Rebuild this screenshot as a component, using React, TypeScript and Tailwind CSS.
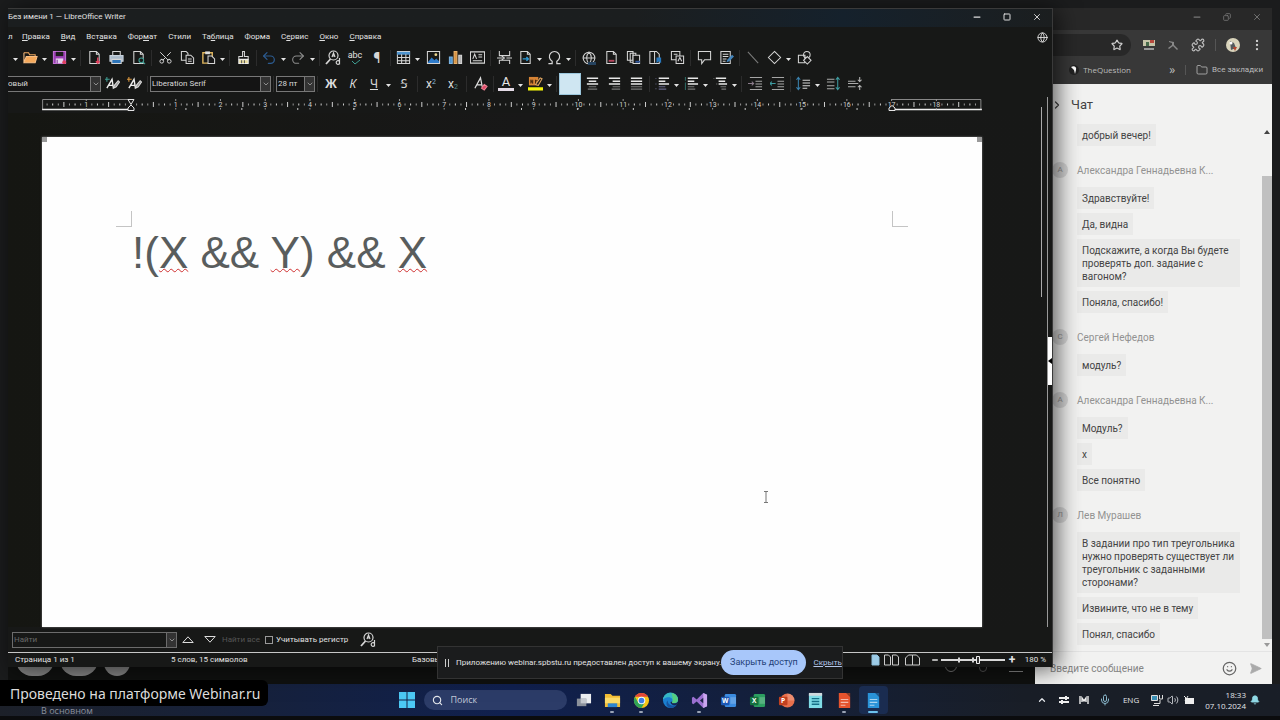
import React from "react";
import {
  Star, Puzzle, EllipsisVertical, Folder, ChevronRight, ChevronUp, ChevronDown, Smile, SendHorizontal,
  Search, Mic, Bell, Volume2, Minus, Square, X, Copy, Undo2, Redo2, Scissors, Globe,
} from "lucide-react";

type Kids = { children?: React.ReactNode };

function Glyph({ children }: Kids) {
  return (
    <svg viewBox="0 0 16 16" className="size-[15px] shrink-0" fill="none" stroke="#d6d6d6" strokeWidth="1.1" aria-hidden="true">
      {children}
    </svg>
  );
}

function Tool({ label, children }: Kids & { label: string }) {
  return (
    <button type="button" aria-label={label} className="flex h-[22px] w-[22px] shrink-0 items-center justify-center">
      {children}
    </button>
  );
}

function Split({ label, children }: Kids & { label: string }) {
  return (
    <div className="flex shrink-0">
      <button type="button" aria-label={label} className="flex h-[22px] w-5 items-center justify-center">
        {children}
      </button>
      <Arrow label={`${label}: список`} />
    </div>
  );
}

function Arrow({ label }: { label: string }) {
  return (
    <button type="button" aria-label={label} className="flex h-[22px] w-[9px] shrink-0 items-center justify-center">
      <svg viewBox="0 0 5 3" className="mt-1 h-[3px] w-[5px]" fill="#e4e4e4" aria-hidden="true"><path d="M0 0h5L2.5 3z" /></svg>
    </button>
  );
}

function Sep() {
  return <span className="flex h-4 w-[5px] shrink-0 justify-center"><i className="w-px bg-[#2c2c2c]" /></span>;
}

const doc = <path d="M3 1.5h7l3 3v10H3zM10 1.5v3h3" />;

function Lines({ d }: { d: string }) {
  return <path d={d} stroke="#e8e8e8" strokeWidth="1.6" />;
}

function MainToolbar() {
  return (
    <div role="toolbar" aria-label="Стандартная" className="flex h-[25px] items-center overflow-hidden pl-[3px]">
      <Arrow label="Создать: список" />
      <Split label="Открыть">
        <Glyph><path d="M1 3h5l1 2h6v2" stroke="#f0a860" /><path d="M1 13V3M1 13.5 3.5 7H15l-2 6.5z" fill="#f5a95b" stroke="#f8c088" /></Glyph>
      </Split>
      <Split label="Сохранить">
        <Glyph><path d="M1.5 1.5h13v13h-13z" fill="#9b3fb4" stroke="#c674d8" /><path d="M4 2h8v4.500H4z" fill="#1c1c1c" stroke="none" /><path d="M4 9h8v5H4z" fill="#e6d3ec" stroke="none" /><path d="M5.500 10.500v4" stroke="#7b2b92" /><circle cx="13" cy="13" r="2" fill="#e0405e" stroke="none" /></Glyph>
      </Split>
      <Sep />
      <Tool label="Экспорт в PDF"><Glyph>{doc}<path d="M11.500 8v6M9.500 12l2 2 2-2" stroke="#e0405e" strokeWidth="1.600" /></Glyph></Tool>
      <Tool label="Печать"><Glyph><path d="M4 6V1.500h8V6" /><path d="M1 6h14v6H1z" fill="#a9b9c8" stroke="#c8d2dc" /><path d="M3 10h10v4.500H3z" fill="#2d74b8" stroke="#d6d6d6" /></Glyph></Tool>
      <Tool label="Просмотр печати"><Glyph>{doc}<circle cx="11" cy="11" r="2.500" fill="#181818" stroke="#3f9f94" /><path d="m13 13 2 2" stroke="#3f9f94" /></Glyph></Tool>
      <Sep />
      <Tool label="Вырезать"><Scissors className="size-[15px] -rotate-90" color="#d0d0d0" strokeWidth={1.6} /></Tool>
      <Tool label="Копировать"><Glyph><path d="M1.500 1.500h5l2 2V11h-7z" /><path d="M6.500 5.500h5l3 3v6h-8z" fill="#181818" /><path d="M8.500 9.500h4M8.500 12h4" /></Glyph></Tool>
      <Split label="Вставить">
        <Glyph><path d="M2 3h10v11H2z" stroke="#e0b55e" strokeWidth="1.500" /><path d="M4.500 1.500h5v3h-5z" fill="#dedede" stroke="none" /><path d="M7.500 6.500h4l3 3v5h-7z" fill="#181818" /></Glyph>
      </Split>
      <Sep />
      <Tool label="Копировать форматирование"><Glyph><path d="M7 1.500h2V7h4v3H3V7h4z" /><path d="M3 10.500h10v4H3z" fill="#e8dc9c" stroke="#eee" /><path d="M6 11v3M9 11v3" stroke="#555" /></Glyph></Tool>
      <Sep />
      <Split label="Отменить"><Undo2 className="size-4" color="#2c5c92" strokeWidth={1.8} /></Split>
      <Split label="Повторить"><Redo2 className="size-4" color="#8d8d8d" strokeWidth={1.6} /></Split>
      <Sep />
      <Tool label="Найти и заменить"><FindGlyph /></Tool>
      <Tool label="Проверка правописания">
        <span className="flex flex-col items-center text-[9px] leading-[9px] text-[#e2e2e2]">abc<svg viewBox="0 0 10 5" className="h-[5px] w-2.5" fill="none" stroke="#3f9f94" aria-hidden="true"><path d="m2 1 3 3 5-4" /></svg></span>
      </Tool>
      <Tool label="Непечатаемые символы"><span className="text-[14px] leading-4 text-[#d6d6d6]">¶</span></Tool>
      <Sep />
      <Split label="Вставить таблицу"><Glyph><path d="M1.500 1.500h13v13h-13z" /><path d="M1 2h14v3H1z" fill="#4f95d0" stroke="none" /><path d="M1.500 8h13M1.500 11.500h13M6 4.500v10M10.500 4.500v10" /></Glyph></Split>
      <Tool label="Вставить изображение"><Glyph><path d="M2 13 6 8l3 3 2-2 4 4v2H2z" fill="#2f7ccb" stroke="none" /><path d="M1.500 1.500h13v13h-13z" /><circle cx="10.500" cy="5" r="1.500" fill="#ead48c" stroke="none" /></Glyph></Tool>
      <Tool label="Вставить диаграмму"><Glyph><path d="M1.500 7.500h3v7h-3z" fill="#4f95d0" stroke="#7db5e3" /><path d="M6.500 1.500h3v13h-3z" fill="#d99242" stroke="#e9b26c" /><path d="M11.500 5.500h3v9h-3z" fill="#b5b5b5" /></Glyph></Tool>
      <Tool label="Вставить врезку"><Glyph><path d="M.5 2h15v12H.5zM3 9.500 5 4.500l2 5M9 5h4M9 7.500h4M3 11.500h10" /></Glyph></Tool>
      <Sep />
      <Tool label="Разрыв страницы"><Glyph><path d="M2.500 1v5h11V1M2.500 15v-4h11v4M0 8.500h6M10 8.500h6M5 6.500l3 2-3 2" /></Glyph></Tool>
      <Split label="Вставить поле"><Glyph>{doc}<path d="M5 9.500h6M9 7.500l2 2-2 2" stroke="#2e9ad6" strokeWidth="1.500" /></Glyph></Split>
      <Split label="Вставить символ">
        <Glyph><path d="M1.500 14.500h4v-2.500A5.500 5.500 0 1 1 10.500 12v2.500h4" strokeWidth="1.300" /></Glyph>
      </Split>
      <Sep />
      <Tool label="Вставить гиперссылку"><span className="relative flex"><Globe className="size-3.5" color="#cfcfcf" strokeWidth={1.8} /><i className="absolute right-0 bottom-0 h-[3px] w-2 bg-[#26435f]" /></span></Tool>
      <Tool label="Вставить сноску"><Glyph>{doc}<path d="M5 11.500h6" stroke="#b8485f" strokeWidth="2" /></Glyph></Tool>
      <Tool label="Вставить концевую сноску"><Glyph><path d="M1.500 1.500h6V11h-6zM4.500 3.500h6V13h-6z" /><path d="M7.500 5.500h7v9h-7z" fill="#181818" /><path d="M10 12.500h5" stroke="#31589a" strokeWidth="2" /></Glyph></Tool>
      <Tool label="Вставить закладку"><Glyph><path d="M2 1.500h7l3 3v10H2z" /><path d="M7 1.500v12" /><path d="M9 8h5v6l-2.500-2L9 14z" fill="#2878bd" stroke="none" /></Glyph></Tool>
      <Tool label="Перекрёстная ссылка"><Glyph><path d="M1.500 1.500h9v9h-9z" /><path d="M6.500 6.500h8v8h-8z" fill="#181818" /><path d="M4 4.500h4M8.500 12l2-4 2 4" /></Glyph></Tool>
      <Sep />
      <Tool label="Вставить комментарий"><Glyph><path d="M1.500 1.500h13v9H8l-3 4v-4H1.500z" /></Glyph></Tool>
      <Tool label="Запись изменений"><Glyph><path d="M2 1.500h10v13H2zM4 4.500h6M4 7h6M4 9.500h4M4 12h3" /><path d="m8 13 1-3 5-5 2 2-5 5z" fill="#4385bd" stroke="none" /></Glyph></Tool>
      <Sep />
      <Tool label="Линия"><Glyph><path d="m2 2 11 12" stroke="#7c7c7c" /></Glyph></Tool>
      <Split label="Фигуры"><Glyph><path d="m8 1.500 6.500 6.500L8 14.500 1.500 8z" /></Glyph></Split>
      <Tool label="Функции рисования"><Glyph><path d="M1.500 5.500h7v8h-7z" /><circle cx="10.500" cy="5" r="3.500" /><path d="m11 7 4 4-4 4-4-4z" fill="#181818" /></Glyph></Tool>
    </div>
  );
}

function FindGlyph() {
  return (
    <svg viewBox="0 0 16 16" className="size-4" fill="none" stroke="#d6d6d6" strokeWidth="1.2" aria-hidden="true">
      <circle cx="8.500" cy="5.500" r="4.500" /><path d="M5.500 9 1 14" strokeWidth="1.800" />
      <path d="M7 7l1.500-4L10 7M7.500 6h2M14.500 8v6.500M14.500 11.500a1.800 1.800 0 1 0 0 2" />
    </svg>
  );
}

function Combo({ label, value, box }: { label: string; value: string; box: string }) {
  return (
    <label className={`flex h-4 shrink-0 border border-[#777] ${box}`}>
      <select aria-label={label} defaultValue={value} className="min-w-0 flex-1 appearance-none bg-[#141414] text-[8px] leading-[14px] text-[#d9d9d9] outline-none">
        <option>{value}</option>
      </select>
      <span className="flex w-2.5 items-center justify-center border-l border-[#777] bg-[#333]"><ChevronDown className="size-2" color="#bbb" /></span>
    </label>
  );
}

function StyleGlyph({ color }: { color: string }) {
  return (
    <Glyph><path d="M2 1v5M0 3.500h5" stroke={color} /><path d="m2 13 5.500-9.500L9 13M4 10h5" stroke="#eee" strokeWidth="1.500" /><path d="m9 13 1-3 4-5 1.500 1.500-3.500 5z" fill="#999" stroke="#ddd" /></Glyph>
  );
}

function FormatToolbar() {
  const letter = "font-['Noto_Sans',sans-serif] text-[12px] leading-4 text-[#dcdcdc]";
  return (
    <div role="toolbar" aria-label="Форматирование" className="flex h-[27px] items-center overflow-hidden">
      <Combo label="Стиль абзаца" value="овый" box="w-[93px] border-l-0 -indent-1" />
      <Tool label="Обновить стиль"><StyleGlyph color="#3f9f94" /></Tool>
      <Tool label="Создать стиль"><StyleGlyph color="#e09a3e" /></Tool>
      <Sep />
      <Combo label="Шрифт" value="Liberation Serif" box="w-[121px] pl-px" />
      <Sep />
      <Combo label="Размер шрифта" value="28 пт" box="w-[39px] pl-px" />
      <Sep />
      <Tool label="Полужирный"><b className={letter}>Ж</b></Tool>
      <Tool label="Курсив"><i className={letter}>К</i></Tool>
      <Split label="Подчёркнутый"><span className={`${letter} underline`}>Ч</span></Split>
      <Tool label="Зачёркнутый"><span className={`${letter} line-through decoration-[#888]`}>S</span></Tool>
      <Sep />
      <Tool label="Верхний индекс"><span className="text-[12px] leading-4 text-[#dcdcdc]">x<sup className="text-[7px] text-[#8db6d6]">2</sup></span></Tool>
      <Tool label="Нижний индекс"><span className="text-[12px] leading-4 text-[#dcdcdc]">x<sub className="text-[7px] text-[#588]">2</sub></span></Tool>
      <Sep />
      <Tool label="Очистить форматирование"><Glyph><path d="m2 13 6-11 2 10M4 9.500h6" stroke="#ddd" strokeWidth="1.300" /><path d="m9 13 3-4 3 2-3 4z" fill="#dc4766" stroke="#ee8294" /></Glyph></Tool>
      <Sep />
      <Split label="Цвет шрифта"><span className="flex flex-col items-center text-[13px] leading-3 text-[#e8e8e8]">A<i className="h-[3px] w-4 bg-[#e4dbe6]" /></span></Split>
      <Split label="Цвет выделения"><Glyph><path d="M1 1h10v9H1z" fill="#d58335" stroke="none" /><path d="M3 8V4l2 4V4M8 4v4h2V5H8" stroke="#4a2b10" /><path d="m8 9 5-7 2 1-4 7z" fill="#292018" stroke="#dfa763" /><path d="M0 12h16v3.500H0z" fill="#f3f30a" stroke="none" /></Glyph></Split>
      <Sep />
      <button type="button" aria-label="По левому краю" aria-pressed="true" className="h-[22px] w-[22px] shrink-0 border border-[#9cc7dd] bg-[#cfe6f2]" />
      <Tool label="По центру"><Glyph><Lines d="M2 2.500h12M4 5.500h8M2 8.500h12" /><path d="M4 11.500h8M3 14h10" stroke="#777" /></Glyph></Tool>
      <Tool label="По правому краю"><Glyph><Lines d="M2 2.500h12M6 5.500h8M2 8.500h12" /><path d="M6 11.500h8M5 14h9" stroke="#777" /></Glyph></Tool>
      <Tool label="По ширине"><Glyph><Lines d="M2 2.500h12M2 5.500h12M2 8.500h12" /><path d="M2 11.500h12M2 14h12" stroke="#777" /></Glyph></Tool>
      <Sep />
      <Split label="Маркированный список"><Glyph><Lines d="M4 2.500h11M4 5.500h7M4 8.500h11" /><path d="M4 11.500h7M4 14h8M1 2v1M1 8v1M1 13v1" stroke="#668" /></Glyph></Split>
      <Split label="Нумерованный список"><Glyph><Lines d="M4 2.500h11M4 5.500h7M4 8.500h11" /><path d="M4 11.500h7M4 14h8" stroke="#777" /><path d="M1.500 1v4M1.500 7v8" stroke="#2f6b66" /></Glyph></Split>
      <Split label="Структура"><Glyph><Lines d="M3 2.500h11M6 5.500h7M6 8.500h9" /><path d="M8 11.500h6M9 14h5M1 2v1M4 8v1" stroke="#777" /></Glyph></Split>
      <Sep />
      <Tool label="Увеличить отступ"><Glyph><path d="M2 1.500h13M8 5.500h7M8 8.500h7M8 11.500h7M2 14.500h13" stroke="#a5a5a5" /><path d="M0 8h6M4 6l2 2-2 2" stroke="#8a7b8a" /></Glyph></Tool>
      <Tool label="Уменьшить отступ"><Glyph><path d="M2 1.500h13M8 5.500h7M8 8.500h7M8 11.500h7M2 14.500h13" stroke="#a5a5a5" /><path d="M0 8h6M2 6 0 8l2 2" stroke="#3d9ba0" /></Glyph></Tool>
      <Sep />
      <Split label="Интервал"><Glyph><path d="M7 4.500h8M7 7.500h8M7 10.500h8M7 13h5" /><path d="M2.500 1.500v13M.5 4l2-2.500 2 2.500M.5 12l2 2.500 2-2.500" stroke="#3b83b0" /></Glyph></Split>
      <Tool label="Увеличить интервал"><Glyph><path d="M1 3.500h8M1 6.500h8M1 10.500h8M1 13.500h8" stroke="#aaa" /><path d="M12.500 1.500v13M10.500 4l2-2.500 2 2.500M10.500 12l2 2.500 2-2.500" stroke="#3d9ba0" /></Glyph></Tool>
      <Tool label="Уменьшить интервал"><Glyph><path d="M0 5.500h8M0 8h11M0 11.500h8" stroke="#aaa" /><path d="M12.500 1v5M10.500 4l2 2 2-2M12.500 15v-4.500M10.500 12l2-2 2 2" stroke="#bbb" /></Glyph></Tool>
    </div>
  );
}

function Ruler() {
  const cm = 44.8;
  const ticks: React.ReactNode[] = [];
  for (let q = -15; q <= 151; q++) {
    const x = 90 + (q * cm) / 8;
    if (q % 8 === 0) {
      const n = Math.abs(q / 8);
      if (n > 0) {
        ticks.push(<text key={q} x={x} y="8" fontSize="7" textAnchor="middle" fill="#d0d0d0">{n}</text>);
        ticks.push(<path key={`n${q}`} d={`M${x} 0v2M${x} 9v1.500`} stroke="#999" />);
      }
    } else {
      ticks.push(<path key={q} d={q % 4 ? `M${x} 4.500v2` : `M${x} 3v5`} stroke={q % 2 ? "#999" : "#d0d0d0"} />);
    }
  }
  for (let x = 145; x < 850; x += 56) ticks.push(<path key={`t${x}`} d={`M${x} 9v2`} stroke="#ccc" />);
  return (
    <div className="pt-[2px] pr-[70px] pb-[2px] pl-[33px]">
      <svg viewBox="0 0 942 12" className="block w-full" fill="none" aria-label="Линейка">
        <path d="M1.500 10V.5H90M852 .5h89V10" stroke="#8a8a8a" />
        <path d="M1 10.500h89M852 10.500h90" stroke="#f0f0f0" strokeWidth="1.500" />
        {ticks}
        <path d="M87 .5h6L90 5.500zM90 6l3 3v2.500h-6V9z" fill="#181818" stroke="#e8e8e8" />
        <path d="M852 6.500l3 2.500v2.500h-6V9z" fill="#181818" stroke="#e8e8e8" />
      </svg>
    </div>
  );
}

function WindowButtons({ dim }: { dim?: boolean }) {
  const color = dim ? "#777" : "#dedede";
  return (
    <div className="ml-auto flex shrink-0">
      <button type="button" aria-label="Свернуть" className="flex h-4 w-[30px] items-center justify-center"><Minus className="size-2.5" color={color} strokeWidth={3} /></button>
      <button type="button" aria-label="Развернуть" className="flex h-4 w-[30px] items-center justify-center">
        {dim ? <Copy className="size-2 -scale-x-100" color={color} strokeWidth={2.5} /> : <Square className="size-2" color={color} strokeWidth={3} />}
      </button>
      <button type="button" aria-label="Закрыть" className="flex h-4 w-[30px] items-center justify-center"><X className="size-2.5" color={color} strokeWidth={2.2} /></button>
    </div>
  );
}

const menus: [string, string, string][] = [
  ["", "П", "равка"], ["", "В", "ид"], ["Вст", "а", "вка"], ["Фор", "м", "ат"], ["Стили", "", ""],
  ["Та", "б", "лица"], ["Форма", "", ""], ["С", "е", "рвис"], ["", "О", "кно"], ["", "С", "правка"],
];

const wavy = "underline decoration-wavy decoration-[#cf2f2f] decoration-1 underline-offset-0 [text-decoration-skip-ink:none]";

function WriterWindow() {
  return (
    <section aria-label="LibreOffice Writer" className="absolute top-0 bottom-[17px] left-0 right-[219px] flex flex-col border-t border-r border-[#3a3a3a] bg-[#171817] font-[Roboto,'Noto_Sans',sans-serif] text-[#e2e2e2] shadow-[4px_2px_22px_rgba(0,0,0,0.65)]">
      <header className="flex h-[18px] items-center bg-linear-to-r from-[#1b1e1f] from-60% via-[#15212c] via-80% to-[#1b1e1f] pb-0.5">
        <h1 className="text-[8px] whitespace-nowrap">Без имени 1 — LibreOffice Writer</h1>
        <WindowButtons />
      </header>
      <nav className="flex h-[18px] items-center pt-0.5 text-[8px] whitespace-nowrap">
        <button type="button" className="w-3.5 text-left">л</button>
        <div className="flex gap-[11px]">
          {menus.map(([a, b, c]) => (
            <button type="button" key={a + b + c}>{a}<u>{b}</u>{c}</button>
          ))}
        </div>
        <Globe className="mr-1 ml-auto size-[11px]" color="#ddd" strokeWidth={2} />
      </nav>
      <MainToolbar />
      <FormatToolbar />
      <div className="relative flex min-h-0 flex-1 flex-col">
        <Ruler />
        <main className="min-h-0 flex-1 bg-linear-to-r from-[#151612] via-[#181818] to-[#171817] pt-6 pr-[70px] pl-[34px]">
          <article className="relative h-full bg-[#fefefe] px-[90px] pt-[90px] font-['Liberation_Sans',Arial,sans-serif] shadow-[0_0_2px_#777]">
            <i className="absolute top-0 left-0 size-[5px] bg-[#999]" />
            <i className="absolute top-0 right-0 size-[5px] bg-[#999]" />
            <i className="absolute top-[74px] left-[74px] size-4 border-r border-b border-[#c4c4c4]" />
            <i className="absolute top-[74px] right-[74px] size-4 border-b border-l border-[#c4c4c4]" />
            <p className="text-[44px] leading-[52px] whitespace-nowrap text-[#595d5d]">
              !(<span className={wavy}>X</span> &amp;&amp; <span className={wavy}>Y</span>) &amp;&amp; <span className={wavy}>X</span>
            </p>
            <svg viewBox="0 0 6 12" className="absolute right-[213px] bottom-[124px] h-3 w-1.5" fill="none" stroke="#777" aria-hidden="true"><path d="M1 .5h4M3 .5v11M1 11.500h4" /></svg>
          </article>
        </main>
        <i className="absolute top-2.5 right-[10px] h-[190px] w-px bg-[#aaa]" />
        <i className="absolute top-0 right-[4px] bottom-0 w-px bg-[#999]" />
        <button type="button" aria-label="Показать боковую панель" className="absolute top-[240px] right-0 flex h-12 w-1 items-center bg-white">
          <svg viewBox="0 0 4 6" className="h-1.5 w-1" aria-hidden="true"><path d="M4 0v6L0 3z" /></svg>
        </button>
      </div>
      <form className="flex h-[25px] items-center pl-1 text-[8px] whitespace-nowrap">
        <div className="flex h-4 w-[165px] border border-[#6c6c6c]">
          <input aria-label="Найти" placeholder="Найти" className="min-w-0 flex-1 bg-transparent px-px text-[8px] outline-none placeholder:text-[#686868]" />
          <span className="flex w-2.5 items-center justify-center border-l border-[#6c6c6c] bg-[#333]"><ChevronDown className="size-2" color="#bbb" /></span>
        </div>
        <button type="button" aria-label="Предыдущее" className="flex w-[22px] justify-center"><svg viewBox="0 0 12 7" className="h-[7px] w-3" fill="none" stroke="#ddd"><path d="M.8 6.500 6 .8l5.200 5.700z" /></svg></button>
        <button type="button" aria-label="Следующее" className="flex w-[22px] justify-center"><svg viewBox="0 0 12 7" className="h-[7px] w-3" fill="none" stroke="#ddd"><path d="M.8.5h10.400L6 6.200z" /></svg></button>
        <button type="button" className="w-10 text-center text-[#555]">Найти все</button>
        <label className="flex items-center gap-[3px] pl-1"><input type="checkbox" className="size-2 appearance-none border border-[#999]" />Учитывать регистр</label>
        <button type="button" aria-label="Найти и заменить" className="ml-3"><FindGlyph /></button>
      </form>
      <footer className="flex h-[15px] items-center border-t border-[#c6c6c6] text-[8px] whitespace-nowrap">
        <span className="w-[163px] pl-[7px]">Страница 1 из 1</span>
        <span className="w-[241px]">5 слов, 15 символов</span>
        <span>Базовый</span>
        <div className="ml-auto flex items-center">
          <svg viewBox="0 0 52 12" className="h-3 w-[52px]" fill="none" stroke="#ccc" aria-hidden="true">
            <path d="M1 1h5l2 2v8H1z" fill="#9ccbe6" stroke="#8fc0dc" /><path d="M13.500 1h4l2 2v8h-6zM21.500 1h4l2 2v8h-6zM34.500 11V4l3-3h4v10zM41.500 1h4l3 3v7h-7z" />
          </svg>
          <button type="button" aria-label="Уменьшить масштаб" className="ml-1.5 flex w-3 justify-center"><Minus className="size-2" strokeWidth={4} /></button>
          <svg viewBox="0 0 64 8" className="h-2 w-16" aria-hidden="true"><path d="M0 3h64v2H0zM17 1.500h2v5h-2zM31 1.500h2v5h-2z" fill="#d8d8d8" /><path d="M35.500.5h3v7h-3z" fill="#333" stroke="#eee" /></svg>
          <button type="button" aria-label="Увеличить масштаб" className="flex w-3.5 justify-center text-[12px] leading-3 font-bold">+</button>
          <output className="w-[33px] pr-1.5 text-right">180 %</output>
        </div>
      </footer>
    </section>
  );
}

const thread: { name?: string; letter?: string; items: string[] }[] = [
  { items: ["добрый вечер!"] },
  { name: "Александра Геннадьевна К...", letter: "А", items: ["Здравствуйте!", "Да, видна", "Подскажите, а когда Вы будете проверять доп. задание с вагоном?", "Поняла, спасибо!"] },
  { name: "Сергей Нефедов", letter: "С", items: ["модуль?"] },
  { name: "Александра Геннадьевна К...", letter: "А", items: ["Модуль?", "х", "Все понятно"] },
  { name: "Лев Мурашев", letter: "Л", items: ["В задании про тип треугольника нужно проверять существует ли треугольник с заданными сторонами?", "Извините, что не в тему", "Понял, спасибо"] },
];

function Chat() {
  return (
    <aside className="flex w-[237px] flex-col bg-[#f2f2f1] font-[Roboto,sans-serif] text-[#444]">
      <header className="flex h-10 shrink-0 items-center gap-2 pt-0.5 pl-4 text-[13px]">
        <ChevronRight className="size-3" strokeWidth={2.5} /><h2>Чат</h2>
      </header>
      <div className="flex min-h-0 flex-1">
        <div className="flex min-w-0 flex-1 flex-col gap-4 overflow-hidden pl-[17px]">
          {thread.map((g, i) => (
            <div key={i} className="flex flex-col">
              {g.name && (
                <div className="mb-[9px] flex h-4 items-center text-[10px] text-[#929292]">
                  <span className="flex size-4 items-center justify-center rounded-full bg-[#d6d6d6] text-[8px]">{g.letter}</span>
                  <span className="pl-[9px]">{g.name}</span>
                </div>
              )}
              <div className="flex flex-col items-start gap-1 pl-[25px]">
                {g.items.map((t) => (
                  <p key={t} className="max-w-[163px] bg-[#eaeae9] px-[5px] pt-[5px] pb-1 text-[10px] leading-[13px]">{t}</p>
                ))}
              </div>
            </div>
          ))}
        </div>
        <div className="flex w-2.5 flex-col items-center pt-1.5">
          <svg viewBox="0 0 6 4" className="h-1 w-1.5" aria-hidden="true"><path d="M0 4h6L3 0z" fill="#444" /></svg>
          <i className="mt-[42px] w-full flex-1 bg-[#c0c0c0]" />
          <svg viewBox="0 0 6 4" className="my-1 h-1 w-1.5" aria-hidden="true"><path d="M0 0h6L3 4z" fill="#999" /></svg>
        </div>
      </div>
      <form className="flex h-[33px] shrink-0 items-center border-t border-[#e4e4e4] pr-2.5 pl-[15px]">
        <input aria-label="Сообщение" placeholder="Введите сообщение" className="min-w-0 flex-1 text-[10px] outline-none placeholder:text-[#858585]" />
        <button type="button" aria-label="Смайлы"><Smile className="size-[15px]" color="#666" strokeWidth={2} /></button>
        <button type="button" aria-label="Отправить" className="ml-3"><SendHorizontal className="size-[13px]" color="#aaa" fill="#aaa" strokeWidth={1.5} /></button>
      </form>
    </aside>
  );
}

function ChromeWindow() {
  return (
    <section aria-label="Браузер" className="absolute inset-0 flex flex-col bg-[#101110] font-['Open_Sans','Noto_Sans',sans-serif] text-[#bbb]">
      <div className="flex h-[22px] items-center bg-[#282828] pb-1"><WindowButtons dim /></div>
      <div className="flex h-[30px] items-center justify-end bg-[#383838] pr-2">
        <div className="flex h-[22px] flex-1 items-center justify-end rounded-full bg-[#282828] pr-2"><Star className="size-3" color="#ccc" strokeWidth={2.4} /></div>
        <div className="flex shrink-0 items-center">
          <svg viewBox="0 0 12 12" className="ml-3 size-3" aria-hidden="true"><path d="M0 1h12v6H0z" fill="#c6c4a8" /><path d="M7 1h4v3H7z" fill="#b84a3e" /><path d="M3 3h3v4H3z" fill="#466a4a" /><path d="M1 9h10v2H1z" fill="#999" /></svg>
          <svg viewBox="0 0 12 12" className="ml-3 size-3" aria-hidden="true"><path d="M2 2l5 1v3l4 4-1 1-4-4-4 3-1-1 4-3V4L2 3z" fill="#888" /></svg>
          <Puzzle className="ml-3 size-3.5" color="#bbb" strokeWidth={2} />
          <i className="ml-2.5 h-3 w-px bg-[#555]" />
          <svg viewBox="0 0 14 14" className="ml-2.5 size-3.5" aria-hidden="true"><circle cx="7" cy="7" r="7" fill="#d9d4bc" /><path d="M4 3l4 2 2 5-5 2z" fill="#54595c" /><path d="M7 9h4l-2 4z" fill="#b5452e" /><circle cx="5" cy="5" r="1.500" fill="#fff" /></svg>
          <EllipsisVertical className="ml-2.5 size-3.5" color="#ccc" />
        </div>
      </div>
      <div className="flex h-6 items-center justify-end bg-[#383838] pr-[9px] pb-1 text-[8px]">
        <svg viewBox="0 0 10 10" className="size-2.5" aria-hidden="true"><circle cx="5" cy="5" r="5" fill="#222" /><path d="M2 2c3-2 6 0 5 3L6 9 5 5z" fill="#fff" /></svg>
        <span className="w-[90px] pl-1">TheQuestion</span>
        <span className="text-[12px] leading-3">»</span>
        <i className="mx-2.5 h-2.5 w-px bg-[#555]" />
        <Folder className="mr-1 size-3" color="#bbb" strokeWidth={1.6} />
        <span className="font-[Roboto,sans-serif]">Все закладки</span>
      </div>
      <div className="flex min-h-0 flex-1">
        <div className="flex flex-1 items-end gap-1.5 overflow-hidden pb-2 pl-2">
          <i className="h-8 w-[38px] rounded-full bg-[#8a8a8a]" />
          <i className="h-8 w-[38px] rounded-full bg-[#8a8a8a]" />
          <i className="size-[26px] rounded-full bg-[#8a8a8a]" />
          <span className="mr-3 ml-auto flex items-end gap-[22px] pb-1">
            <i className="size-3 rounded-full border border-[#777]" /><i className="h-3 w-2 rounded-full border border-[#555]" /><i className="h-3 w-3.5 border-b border-[#888]" />
          </span>
        </div>
        <Chat />
      </div>
    </section>
  );
}

function App16({ children }: Kids) {
  return <svg viewBox="0 0 18 18" className="size-[17px]" aria-hidden="true">{children}</svg>;
}

function Office({ light, dark, letter, round }: { light: string; dark: string; letter: string; round?: boolean }) {
  return (
    <App16>
      {round ? <circle cx="10" cy="9" r="7.500" fill={light} /> : <rect x="5" y="2" width="12" height="14" rx="1.500" fill={light} />}
      <path d={round ? "M10 1.500a7.500 7.500 0 0 1 7.500 7.500H10z" : "M11 5.500h6v7h-6z"} fill="#fff" fillOpacity=".2" />
      <rect x="1" y="5" width="9" height="9" rx="1" fill={dark} />
      <text x="5.500" y="12" fontSize="7" fontWeight="700" textAnchor="middle" fill="#fff">{letter}</text>
    </App16>
  );
}

function Sheet({ color, top }: { color: string; top: string }) {
  return (
    <App16><path d="M3 1h8l4 4v12H3z" fill={color} /><path d="M11 1h4v4z" fill={top} /><path d="M5 8h8M5 11h8M5 14h5" stroke="#fff" strokeOpacity=".6" strokeWidth="1.200" /></App16>
  );
}

const apps: { name: string; icon: React.ReactNode; open?: boolean; active?: boolean }[] = [
  { name: "Представление задач", icon: <App16><path d="M6 2h11v10H6z" fill="#eceef0" /><path d="M2 7h10v8H2z" fill="#8b919b" /><path d="M6 7h6v5H6z" fill="#c4c8cd" /></App16> },
  { name: "Проводник", open: true, icon: <App16><path d="M1 2h6l2 2h8v12H1z" fill="#f2bd34" /><path d="M1 6h16v6H1z" fill="#fbdb69" /><path d="M4 12h10v4H4z" fill="#2e86d1" /></App16> },
  { name: "Chrome", open: true, icon: <App16><circle cx="9" cy="9" r="8" fill="#f5c518" /><path d="M2.070 5A8 8 0 0 1 15.930 5H9z" fill="#e2453a" /><path d="M2.070 5A8 8 0 0 0 9 17l3.400-6L9 9 5.500 11z" fill="#2fa557" /><circle cx="9" cy="9" r="4" fill="#fff" /><circle cx="9" cy="9" r="3" fill="#3c7de6" /></App16> },
  { name: "Edge", icon: <App16><circle cx="9" cy="9" r="8" fill="#1b7fd0" /><path d="M1 9a8 8 0 0 1 16-1c0 3-2 4-4.500 4-2 0-2.500-1-1.500-2 1-2-1-4.500-4-4.500S1 7 1 9z" fill="#35b7c6" /><path d="M10 1.100A8 8 0 0 1 17 8c0 3-2 4-4.500 4-2 0-2.500-1-1.500-2 1-2 0-6-1-8.900z" fill="#55cf80" /><path d="M6 9c0 5 5 6.500 9.500 4.500A8 8 0 0 1 9 17C4 16 4 11 6 9z" fill="#1654a0" /><path d="M11 10c-1 1-.5 2 1.500 2 2 0 3.500-.7 4.200-2l.3 2-1.500 1.500C12 15 9 13 9 10.500z" fill="#17284f" /></App16> },
  { name: "Visual Studio", open: true, icon: <App16><path d="M13 1l4 2v12l-4 2-7-7-3.500 3L1 12V6l1.500-1L6 8z" fill="#9a6fd0" /><path d="M13 1l4 2v12l-4 2z" fill="#c9a5ee" /><path d="M13 6v6L9.500 9z" fill="#1b2345" /></App16> },
  { name: "Word", icon: <Office light="#3b8be0" dark="#1c57b4" letter="W" /> },
  { name: "Excel", icon: <Office light="#2c9e60" dark="#14703e" letter="X" /> },
  { name: "PowerPoint", icon: <Office light="#e8704c" dark="#c2401f" letter="P" round /> },
  { name: "Блокнот", icon: <App16><path d="M2 2h14v15H2z" fill="#7fdce6" /><path d="M2 1h14v3H2z" fill="#cfd9dd" /><path d="M5 7h8M5 10h8M5 13h8" stroke="#156f86" strokeWidth="1.500" /></App16> },
  { name: "LibreOffice Impress", open: true, icon: <Sheet color="#e5532d" top="#8a3a24" /> },
  { name: "LibreOffice Writer", active: true, icon: <Sheet color="#2a93d8" top="#1d5688" /> },
];

function Taskbar() {
  return (
    <footer className="grid h-8 shrink-0 grid-cols-[1fr_auto_1fr] items-center bg-linear-to-r from-[#1c2029] via-[#10204f] via-40% to-[#191e27] to-80% px-2 font-['Open_Sans','Noto_Sans',sans-serif] text-[#e2e5ea]">
      <div className="self-end overflow-hidden pl-[33px] text-[9px] leading-[11px] text-[#8a8f9c]">В основном</div>
      <div className="flex items-center">
        <button type="button" aria-label="Пуск" className="flex w-[29px] justify-center"><svg viewBox="0 0 16 16" className="size-4" fill="#4cc8f4"><path d="M0 0h7.500v7.500H0zM8.500 0H16v7.500H8.500zM0 8.500h7.500V16H0zM8.500 8.500H16V16H8.500z" /></svg></button>
        <label className="mx-[2px] flex h-5 w-[143px] items-center gap-2 rounded-full bg-[#2c3c68] px-2">
          <Search className="size-[11px] shrink-0" strokeWidth={2.5} />
          <input aria-label="Поиск" placeholder="Поиск" className="min-w-0 flex-1 text-[9px] outline-none placeholder:text-[#c2c9d8]" />
        </label>
        {apps.map((a) => (
          <button type="button" key={a.name} aria-label={a.name} className={`relative flex h-7 w-[29px] items-center justify-center rounded ${a.active ? "bg-[#1a2c50]" : ""}`}>
            {a.icon}
            {a.open && <i className="absolute bottom-px h-[2px] w-1 rounded bg-[#9aa3b5]" />}
            {a.active && <i className="absolute bottom-px h-[2px] w-2.5 rounded bg-[#6cc2ee]" />}
          </button>
        ))}
      </div>
      <div className="flex items-center justify-end text-[8px] whitespace-nowrap">
        <ChevronUp className="mr-3 size-2.5" strokeWidth={3} />
        <svg viewBox="0 0 10 8" className="mr-2.5 h-2 w-2.5" fill="#eee" aria-hidden="true"><path d="M0 1h10v2H0zM0 5h10v2H0zM6 0h2v4H6zM2 4h2v4H2z" /></svg>
        <svg viewBox="0 0 10 8" className="mr-2.5 h-2 w-2.5" fill="none" stroke="#eee" strokeWidth="1.400" aria-hidden="true"><path d="M1 0v8M9 0v8M3 6V2l2 3 2-3v4" /></svg>
        <Mic className="mr-3 size-3" color="#8ab8cc" />
        <span className="mr-3">ENG</span>
        <svg viewBox="0 0 12 12" className="mr-1 size-3" fill="none" stroke="#ddd" aria-hidden="true"><path d="M.5 1.500h6v5h-6z" fill="#3b8fb5" /><path d="M8.500 1v4h3V1M3 9.500h6V6M2 11.500h6" /></svg>
        <Volume2 className="mr-1 size-3" strokeWidth={1.6} />
        <svg viewBox="0 0 12 10" className="mr-2.5 h-2.5 w-3" aria-hidden="true"><path d="M2 3h9v6H2z" fill="#eee" /><path d="M1 1l4 4M5 1 2 6" stroke="#eee" /></svg>
        <time className="mr-1 text-right leading-[11px]">18:33<br />07.10.2024</time>
        <Bell className="mr-3 size-2.5" color="#8fd8e4" fill="#8fd8e4" />
      </div>
    </footer>
  );
}

export default function App() {
  return (
    <div className="relative flex h-screen w-full flex-col overflow-hidden bg-[#1b1c1d] pt-2">
      <div className="relative mx-2 min-h-0 flex-1">
        <ChromeWindow />
        <WriterWindow />
        <div role="status" className="absolute bottom-[5px] left-1/2 flex h-[33px] w-[406px] -translate-x-1/2 items-center border border-[#333] bg-[#1b1c1d] px-1.5 font-[Roboto,sans-serif] text-[8px] whitespace-nowrap text-[#e2e2e2]">
          <i className="mx-px h-2 w-1 shrink-0 border-x border-[#ccc]" />
          <span className="flex-1 pl-1.5">Приложению webinar.spbstu.ru предоставлен доступ к вашему экрану.</span>
          <button type="button" className="h-[25px] w-[85px] shrink-0 rounded-full bg-[#a8c7fa] text-[9px] text-[#1f3f77]">Закрыть доступ</button>
          <a href="#hide" className="pr-[2px] pl-[7px] text-[#b3c4e8] underline">Скрыть</a>
        </div>
      </div>
      <Taskbar />
      <div className="h-1 shrink-0 bg-[#0b0c0e]" />
      <p className="absolute bottom-3.5 left-0 rounded-r-md bg-black pt-0.5 pr-2 pl-2.5 font-['Noto_Sans',sans-serif] text-[14px] leading-6 text-[#dcdcdc]">Проведено на платформе Webinar.ru</p>
    </div>
  );
}
